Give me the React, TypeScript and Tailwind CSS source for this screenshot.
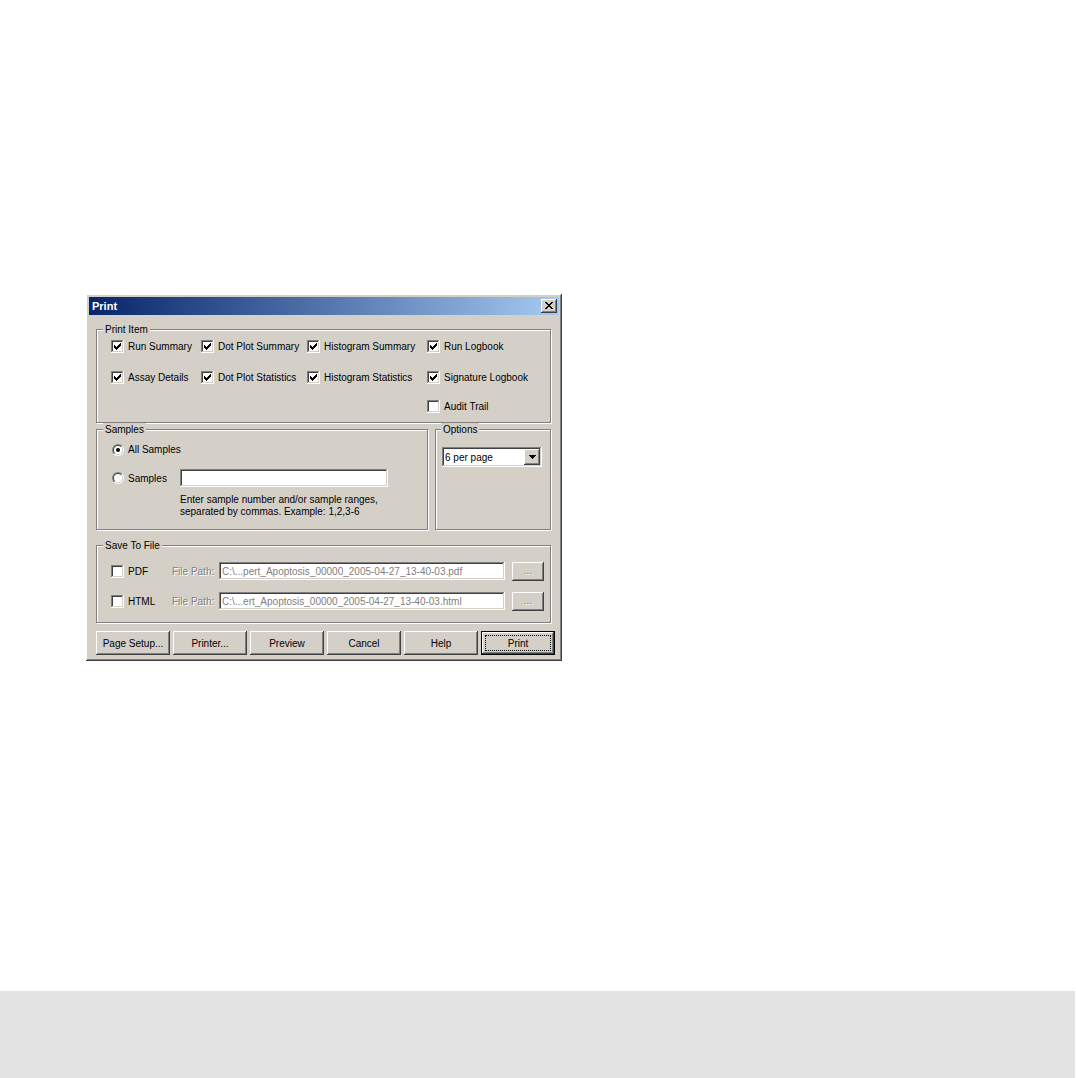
import React from 'react';

const raised = "shadow-[inset_-1px_-1px_#404040,inset_1px_1px_#ffffff,inset_-2px_-2px_#808080,inset_2px_2px_#d4d0c8]";
const sunken = "shadow-[inset_-1px_-1px_#ffffff,inset_1px_1px_#808080,inset_-2px_-2px_#d4d0c8,inset_2px_2px_#404040]";
const etched = "border border-[#808080] shadow-[inset_1px_1px_0_#ffffff,1px_1px_0_#ffffff]";
const disabledText = "text-[#808080] [text-shadow:1px_1px_0_#ffffff]";

function Check({ checked }: { checked?: boolean }) {
    return (
        <span className={`flex h-[13px] w-[13px] shrink-0 items-center justify-center bg-white ${sunken}`}>
            {checked && (
                <svg width="7" height="7" viewBox="0 0 7 7" shapeRendering="crispEdges">
                    <path d="M0 2h1v3H0zM1 3h1v3H1zM2 4h1v3H2zM3 3h1v3H3zM4 2h1v3H4zM5 1h1v3H5zM6 0h1v3H6z" fill="#000" />
                </svg>
            )}
        </span>
    );
}

function Radio({ on }: { on?: boolean }) {
    return (
        <span className="flex h-[12px] w-[12px] shrink-0 items-center justify-center rounded-full border border-t-[#808080] border-l-[#808080] border-b-white border-r-white">
            <span className="flex h-[10px] w-[10px] items-center justify-center rounded-full border border-t-[#404040] border-l-[#404040] border-b-[#d4d0c8] border-r-[#d4d0c8] bg-white">
                {on && <span className="h-[4px] w-[4px] rounded-full bg-black" />}
            </span>
        </span>
    );
}

function CheckItem({ label, checked, width }: { label: string; checked?: boolean; width: string }) {
    return (
        <div className={`flex items-center gap-[4px] ${width}`}>
            <Check checked={checked} />
            <span className="whitespace-nowrap leading-[13px]">{label}</span>
        </div>
    );
}

function Button({ label, isDefault }: { label: string; isDefault?: boolean }) {
    if (isDefault) {
        return (
            <div className="h-[24px] w-[74px] border border-black bg-[#d4d0c8]">
                <div className={`h-full w-full p-[3px] ${raised}`}>
                    <div className="flex h-full w-full items-center justify-center border border-dotted border-black">
                        {label}
                    </div>
                </div>
            </div>
        );
    }
    return (
        <div className={`flex h-[24px] w-[74px] items-center justify-center bg-[#d4d0c8] ${raised}`}>
            {label}
        </div>
    );
}

function FileRow({ label, path, className }: { label: string; path: string; className?: string }) {
    return (
        <div className={`flex h-[18px] items-center ${className ?? ''}`}>
            <div className="flex w-[61px] items-center gap-[4px]">
                <Check />
                <span>{label}</span>
            </div>
            <span className={`w-[47px] whitespace-nowrap ${disabledText}`}>File Path:</span>
            <div className={`flex h-[18px] w-[286px] items-center bg-white pl-[3px] text-[#808080] ${sunken}`}>
                <span className="whitespace-nowrap">{path}</span>
            </div>
            <div className={`ml-[7px] flex h-[19px] w-[32px] items-center justify-center bg-[#d4d0c8] ${raised}`}>
                <span className={`${disabledText} leading-none`}>...</span>
            </div>
        </div>
    );
}

function PrintDialog() {
    return (
        <div className={`ml-[86px] mt-[294px] flex h-[367px] w-[476px] flex-col bg-[#d4d0c8] p-[3px] text-[10px] text-black ${raised}`}>
            <div className="flex h-[18px] items-center justify-between bg-gradient-to-r from-[#0a246a] to-[#a6caf0] pl-[3px] pr-[2px]">
                <span className="text-[11px] font-bold text-white">Print</span>
                <div className={`flex h-[14px] w-[16px] items-center justify-center bg-[#d4d0c8] pb-px pr-px ${raised}`}>
                    <svg width="8" height="7" viewBox="0 0 8 7" shapeRendering="crispEdges">
                        <path d="M0 0h2v1H0zM6 0h2v1H6zM1 1h2v1H1zM5 1h2v1H5zM2 2h4v1H2zM3 3h2v1H3zM2 4h4v1H2zM1 5h2v1H1zM5 5h2v1H5zM0 6h2v1H0zM6 6h2v1H6z" fill="#000" />
                    </svg>
                </div>
            </div>

            <div className="flex flex-col pl-[7px]">
                <fieldset className={`mt-[8px] h-[100px] w-[455px] ${etched}`}>
                    <legend className="ml-[6px] bg-[#d4d0c8] px-[2px] leading-[13px]">Print Item</legend>
                    <div className="flex flex-col pl-[14px]">
                        <div className="mt-[4px] flex">
                            <CheckItem label="Run Summary" checked width="w-[90px]" />
                            <CheckItem label="Dot Plot Summary" checked width="w-[106px]" />
                            <CheckItem label="Histogram Summary" checked width="w-[120px]" />
                            <CheckItem label="Run Logbook" checked width="w-[110px]" />
                        </div>
                        <div className="mt-[18px] flex">
                            <CheckItem label="Assay Details" checked width="w-[90px]" />
                            <CheckItem label="Dot Plot Statistics" checked width="w-[106px]" />
                            <CheckItem label="Histogram Statistics" checked width="w-[120px]" />
                            <CheckItem label="Signature Logbook" checked width="w-[110px]" />
                        </div>
                        <div className="mt-[16px] flex pl-[316px]">
                            <CheckItem label="Audit Trail" width="w-[110px]" />
                        </div>
                    </div>
                </fieldset>

                <div className="flex gap-[7px]">
                    <fieldset className={`h-[107px] w-[332px] ${etched}`}>
                        <legend className="ml-[6px] bg-[#d4d0c8] px-[2px] leading-[13px]">Samples</legend>
                        <div className="flex flex-col pl-[15px]">
                            <div className="mt-[7px] flex h-[13px] items-center gap-[4px]">
                                <Radio on />
                                <span>All Samples</span>
                            </div>
                            <div className="mt-[13px] flex h-[18px] items-center">
                                <div className="flex w-[68px] items-center gap-[4px]">
                                    <Radio />
                                    <span>Samples</span>
                                </div>
                                <div className={`h-[18px] w-[208px] bg-white ${sunken}`} />
                            </div>
                            <div className="mt-[7px] pl-[68px] leading-[12px]">
                                <div>Enter sample number and/or sample ranges,</div>
                                <div>separated by commas. Example: 1,2,3-6</div>
                            </div>
                        </div>
                    </fieldset>
                    <fieldset className={`h-[107px] w-[116px] ${etched}`}>
                        <legend className="ml-[5px] bg-[#d4d0c8] px-[2px] leading-[13px]">Options</legend>
                        <div className="pl-[6px] pt-[11px]">
                            <div className={`flex h-[20px] w-[100px] items-center bg-white pl-[3px] pr-[2px] ${sunken}`}>
                                <span className="flex-1 whitespace-nowrap">6 per page</span>
                                <div className={`flex h-[16px] w-[16px] items-center justify-center bg-[#d4d0c8] ${raised}`}>
                                    <svg width="7" height="4" viewBox="0 0 7 4" shapeRendering="crispEdges">
                                        <path d="M0 0h7v1H0zM1 1h5v1H1zM2 2h3v1H2zM3 3h1v1H3z" fill="#000" />
                                    </svg>
                                </div>
                            </div>
                        </div>
                    </fieldset>
                </div>

                <fieldset className={`mt-[9px] h-[84px] w-[455px] ${etched}`}>
                    <legend className="ml-[6px] bg-[#d4d0c8] px-[2px] leading-[13px]">Save To File</legend>
                    <div className="flex flex-col pl-[14px]">
                        <FileRow className="mt-[10px]" label="PDF" path={'C:\\...pert_Apoptosis_00000_2005-04-27_13-40-03.pdf'} />
                        <FileRow className="mt-[12px]" label="HTML" path={'C:\\...ert_Apoptosis_00000_2005-04-27_13-40-03.html'} />
                    </div>
                </fieldset>

                <div className="mt-[8px] flex gap-[3px]">
                    <Button label="Page Setup..." />
                    <Button label="Printer..." />
                    <Button label="Preview" />
                    <Button label="Cancel" />
                    <Button label="Help" />
                    <Button label="Print" isDefault />
                </div>
            </div>
        </div>
    );
}

export default function App() {
    return (
        <div className="flex h-[1078px] w-full flex-col overflow-hidden bg-white font-['Liberation_Sans',Arial,sans-serif]">
            <PrintDialog />
            <div className="mt-auto h-[87px] w-[1075px] bg-[#e3e3e3]" />
        </div>
    );
}
